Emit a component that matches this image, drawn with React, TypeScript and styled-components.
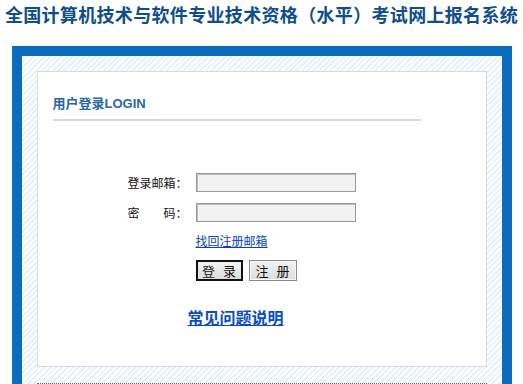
import styled, { createGlobalStyle } from "styled-components";

const GlobalStyle = createGlobalStyle`
    body {
        margin: 0;
        background: #fff;
        font-family: "Noto Sans CJK SC", "Liberation Sans", sans-serif;
        font-size: 12px;
        color: #222;
    }
`;

const Title = styled.h1`
    margin: 0;
    height: 46px;
    padding-top: 2px;
    box-sizing: border-box;
    text-align: center;
    font-size: 18px;
    line-height: 24px;
    letter-spacing: 0.33px;
    font-weight: bold;
    color: #0e4d8e;
    white-space: nowrap;
`;

const Frame = styled.div`
    width: 500px;
    margin: 0 auto;
    box-sizing: border-box;
    border: 10px solid #0a6cbc;
    border-bottom: none;
    padding: 15px 15px 0;
    background: repeating-linear-gradient(
        -45deg,
        #ffffff 0px,
        #ffffff 2px,
        #e8f0f9 2px,
        #e8f0f9 4px
    );
`;

const Panel = styled.div`
    height: 296px;
    box-sizing: border-box;
    background: #fff;
    border: 1px solid #d3dbe6;
    padding: 22px 15px 0;
`;

const Heading = styled.h2`
    margin: 0;
    font-size: 13px;
    line-height: 19px;
    font-weight: bold;
    color: #2a68a3;
    font-family: "Liberation Sans", "Noto Sans CJK SC", sans-serif;
`;

const Rule = styled.div`
    width: 368px;
    height: 2px;
    margin-top: 6px;
    background: #d8d8d8;
`;

const Form = styled.div`
    display: grid;
    grid-template-columns: 68px auto;
    row-gap: 11px;
    align-items: center;
    margin: 52px 0 0 75px;
`;

const Label = styled.span`
    font-size: 12px;
    line-height: 16px;
    color: #111;
    white-space: pre;
`;

const Field = styled.input`
    width: 160px;
    height: 19px;
    box-sizing: border-box;
    border: 1px solid #999;
    box-shadow: inset 1px 1px 0 #bbb;
    background: #f2f2f2;
    padding: 0 3px;
    font-size: 12px;
    outline: none;
`;

const Cell = styled.div<{ $col?: number }>`
    grid-column: ${(p) => p.$col ?? "auto"};
    display: flex;
    gap: 6px;
`;

const Link = styled.a`
    font-size: 12px;
    line-height: 16px;
    color: #0a3fcc;
    text-decoration: underline;
    cursor: pointer;
`;

const Button = styled.button<{ $primary?: boolean }>`
    width: ${(p) => (p.$primary ? "47px" : "48px")};
    height: 21px;
    box-sizing: border-box;
    padding: 0;
    font-family: "Noto Sans CJK SC", sans-serif;
    font-size: 13px;
    line-height: 17px;
    word-spacing: 5px;
    color: #111;
    background: linear-gradient(#f2f2f2, #dcdcdc);
    border: ${(p) => (p.$primary ? "2px solid #111" : "1px solid #8a8a8a")};
    box-shadow: ${(p) => (p.$primary ? "none" : "inset 0 0 0 1px #f8f8f8")};
`;

const Faq = styled.a`
    display: block;
    margin: 25px 0 0 135px;
    width: fit-content;
    font-size: 16px;
    line-height: 22px;
    font-weight: bold;
    color: #0b4cc4;
    text-decoration: underline;
`;

const Footer = styled.div`
    height: 0;
    margin-top: 16px;
    border-top: 1px dotted #666;
`;

export default function App() {
    return (
        <>
            <GlobalStyle />
            <Title>全国计算机技术与软件专业技术资格（水平）考试网上报名系统</Title>
            <Frame>
                <Panel>
                    <Heading>用户登录LOGIN</Heading>
                    <Rule />
                    <Form>
                        <Label>登录邮箱：</Label>
                        <Field type="text" />
                        <Label>密　　码：</Label>
                        <Field type="password" />
                        <Cell $col={2}>
                            <Link>找回注册邮箱</Link>
                        </Cell>
                        <Cell $col={2}>
                            <Button $primary>登 录</Button>
                            <Button>注 册</Button>
                        </Cell>
                    </Form>
                    <Faq>常见问题说明</Faq>
                </Panel>
                <Footer />
            </Frame>
        </>
    );
}
